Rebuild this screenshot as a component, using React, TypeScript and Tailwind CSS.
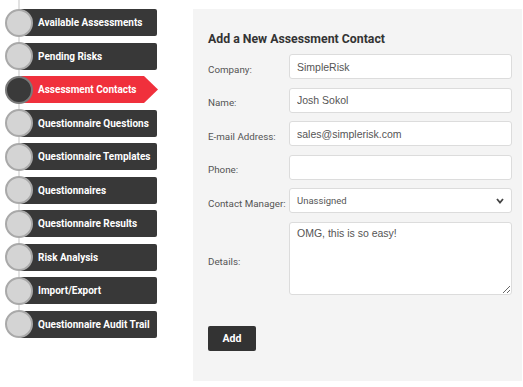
import React from "react";

const items = [
  "Available Assessments",
  "Pending Risks",
  "Assessment Contacts",
  "Questionnaire Questions",
  "Questionnaire Templates",
  "Questionnaires",
  "Questionnaire Results",
  "Risk Analysis",
  "Import/Export",
  "Questionnaire Audit Trail",
];

function NavItem({ label, active }: { label: string; active?: boolean }) {
  return (
    <div className="flex items-center h-[27px] relative">
      <div
        className={
          "w-[28px] h-[28px] rounded-full shrink-0 z-10 border-2 " +
          (active ? "bg-[#3a3a3a] border-[#7a7a7a]" : "bg-[#d4d4d4] border-[#a9a9a9]")
        }
      />
      {active ? (
        <div className="-ml-[13px] flex items-center h-[27px]">
          <div className="h-[27px] w-[123px] bg-[#f0303c] rounded-l-[2px] pl-[18px] flex items-center text-white text-[10px] font-bold whitespace-nowrap">
            {label}
          </div>
          <svg width="15" height="27" viewBox="0 0 15 27" className="block">
            <polygon points="0,0 1,0 15,13.5 1,27 0,27" fill="#f0303c" />
          </svg>
        </div>
      ) : (
        <div className="-ml-[13px] h-[27px] w-[137px] bg-[#383838] rounded-[2px] pl-[18px] flex items-center text-white text-[10px] font-bold whitespace-nowrap">
          {label}
        </div>
      )}
    </div>
  );
}

function Row({ label, children }: { label: string; children: React.ReactNode }) {
  return (
    <div className="flex items-center">
      <div className="w-[81px] shrink-0 pt-[7px] text-[9.8px] text-[#555]">{label}</div>
      <div className="flex-1 flex flex-col">{children}</div>
    </div>
  );
}

const inputCls =
  "block w-full h-[25px] bg-white border border-[#dcdcdc] rounded-[3px] px-[7px] text-[10.5px] text-[#555] outline-none";
const arial = { fontFamily: "'Liberation Sans', Arial, sans-serif" };

export default function App() {
  return (
    <div
      className="w-[523px] h-[387px] bg-white flex relative overflow-hidden"
      style={{ fontFamily: "Roboto, 'Liberation Sans', sans-serif" }}
    >
      <div className="w-[193px] shrink-0 relative pt-[9px] pl-[5px]">
        <div className="absolute left-[18px] top-0 w-[2px] h-[325px] bg-[#e2e2e2]" />
        <div className="flex flex-col gap-[6.5px] relative">
          {items.map((it) => (
            <NavItem key={it} label={it} active={it === "Assessment Contacts"} />
          ))}
        </div>
      </div>
      <div className="mt-[9px] w-[329px] h-[372px] bg-[#f4f4f4] pl-[15px] pr-[10px] pt-[23px]">
        <h2 className="text-[12.3px] font-bold text-[#333] leading-[15px]">Add a New Assessment Contact</h2>
        <div className="mt-[7px] flex flex-col gap-[8.6px]">
          <Row label="Company:">
            <input className={inputCls} defaultValue="SimpleRisk" style={arial} />
          </Row>
          <Row label="Name:">
            <input className={inputCls} defaultValue="Josh Sokol" style={arial} />
          </Row>
          <Row label="E-mail Address:">
            <input className={inputCls} defaultValue="sales@simplerisk.com" style={arial} />
          </Row>
          <Row label="Phone:">
            <input className={inputCls} defaultValue="" />
          </Row>
          <Row label="Contact Manager:">
            <div className="relative">
              <div className="w-full h-[25px] bg-white border border-[#dcdcdc] rounded-[3px] px-[7px] text-[9.5px] text-[#555] flex items-center">
                Unassigned
              </div>
              <svg className="absolute right-[8px] top-[10px]" width="8" height="6" viewBox="0 0 8 6">
                <path d="M1 1 L4 4.5 L7 1" stroke="#444" strokeWidth="1.8" fill="none" />
              </svg>
            </div>
          </Row>
          <Row label="Details:">
            <textarea
              className="w-full h-[73px] bg-white border border-[#dcdcdc] rounded-[3px] px-[7px] py-[3px] text-[10.5px] text-[#555] outline-none resize-y block"
              style={arial}
              defaultValue="OMG, this is so easy!"
            />
          </Row>
        </div>
        <button className="mt-[31px] w-[48px] h-[25px] bg-[#333] text-white text-[10.5px] font-bold rounded-[2px]">
          Add
        </button>
      </div>
    </div>
  );
}
